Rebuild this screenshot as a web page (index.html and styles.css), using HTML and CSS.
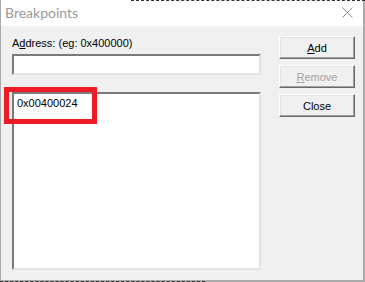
FILE: index.html
```html
<!DOCTYPE html>
<html lang="en">
<head>
    <meta charset="UTF-8">
    <title>Breakpoints</title>
    <link rel="stylesheet" href="styles.css">
</head>
<body>
    <div class="window">
        <div class="titlebar">
            <span class="title">Breakpoints</span>
            <svg class="close" width="11" height="11" viewBox="0 0 11 11">
                <path d="M0.5 0.5 L10.5 10.5 M10.5 0.5 L0.5 10.5" stroke="#8c8c8c" stroke-width="1" fill="none"/>
            </svg>
        </div>
        <div class="content">
            <div class="left">
                <label class="label" for="address">A<u>d</u>dress: (eg: 0x400000)</label>
                <div class="input" id="address"></div>
                <div class="list">
                    <div class="item">0x00400024</div>
                </div>
            </div>
            <div class="buttons">
                <div class="button"><u>A</u>dd</div>
                <div class="button disabled"><u>R</u>emove</div>
                <div class="button">Close</div>
            </div>
        </div>
        <!-- dashed edges of the selection behind the dialog -->
        <div class="dash dash-top"></div>
        <div class="dash dash-bottom"></div>
        <!-- highlight annotation -->
        <div class="highlight"></div>
    </div>
</body>
</html>
```

FILE: styles.css
```css
body {
    margin: 0;
    padding: 0;
    font-family: "Liberation Sans", Arial, sans-serif;
    background-color: #ffffff;
}

.window {
    position: relative;
    width: 365px;
    height: 282px;
    box-sizing: border-box;
    border-left: 1px solid #aaaaaa;
    border-right: 2px solid #aaaaaa;
    border-bottom: 2px solid #aaaaaa;
    background-color: #f0f0f0;
    display: flex;
    flex-direction: column;
}

.titlebar {
    height: 26px;
    background-color: #ffffff;
    display: flex;
    align-items: center;
    justify-content: space-between;
    padding: 0 10px 2px 4px;
    box-sizing: border-box;
}

.title {
    font-family: Lato, "Noto Sans", sans-serif;
    font-size: 14px;
    color: #999999;
}

.close {
    display: block;
}

.content {
    display: flex;
    padding: 10px 0 0 11px;
}

.left {
    display: flex;
    flex-direction: column;
    width: 249px;
}

.label {
    font-size: 11px;
    color: #000;
    height: 18px;
    line-height: 15px;
}

.input,
.list {
    box-sizing: border-box;
    background-color: #ffffff;
    border-top: 2px solid #7a7a7a;
    border-left: 2px solid #7a7a7a;
    border-right: 2px solid #e3e3e3;
    border-bottom: 2px solid #e3e3e3;
}

.input {
    height: 21px;
}

.list {
    margin-top: 17px;
    height: 178px;
    padding: 3px 3px;
}

.item {
    font-size: 11px;
    line-height: 13px;
}

.buttons {
    display: flex;
    flex-direction: column;
    gap: 6px;
    margin-left: 18px;
    margin-top: 0;
}

.button {
    box-sizing: border-box;
    width: 76px;
    height: 23px;
    display: flex;
    align-items: center;
    justify-content: center;
    font-size: 11px;
    color: #000;
    background-color: #f0f0f0;
    border-top: 1px solid #ffffff;
    border-left: 1px solid #ffffff;
    border-right: 1px solid #696969;
    border-bottom: 1px solid #696969;
    box-shadow: inset -1px -1px 0 #a0a0a0, inset 1px 1px 0 #e3e3e3;
}

.button.disabled {
    color: #a0a0a0;
}

.dash {
    position: absolute;
    height: 0;
    border-top: 1px dashed #333333;
}

.dash-top {
    top: 0;
    left: 130px;
    right: -2px;
}

.dash-bottom {
    bottom: -2px;
    left: -1px;
    width: 205px;
}

.highlight {
    position: absolute;
    left: 3px;
    top: 87px;
    width: 83px;
    height: 27px;
    border: 5px solid #ed1c24;
}
```
